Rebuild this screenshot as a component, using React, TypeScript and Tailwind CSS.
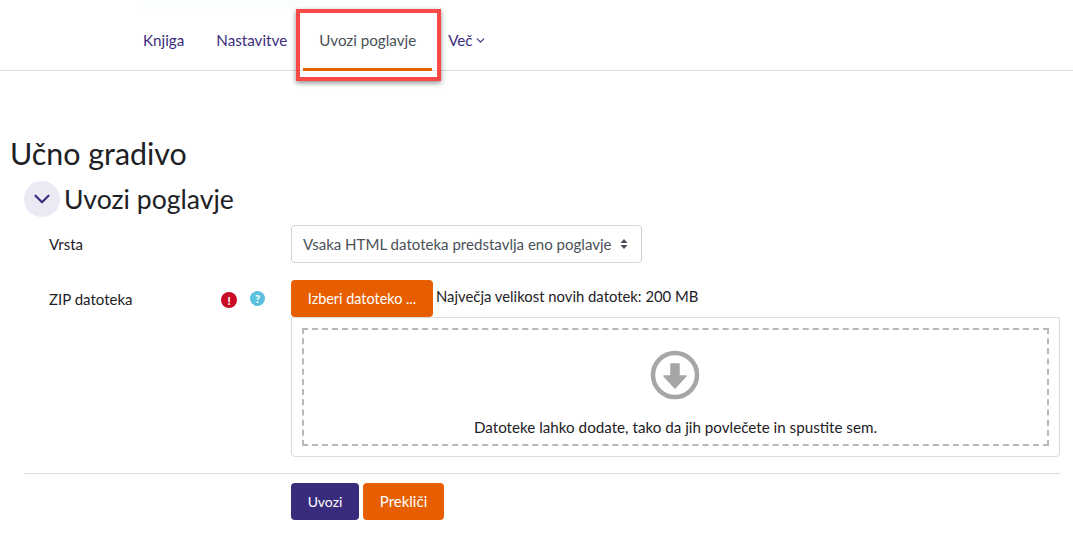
import { ChevronDown } from "lucide-react";

function Tab({ label, active }: { label: string; active?: boolean }) {
  return (
    <a className={`relative flex h-full items-center px-4 pt-[1px] text-[15.2px] ${active ? "text-[#495057]" : "text-[#3a2c7d]"}`}>
      {label}
      {active && <span className="absolute bottom-[-1px] left-0 right-0 h-[3px] bg-[#e75e00]" />}
    </a>
  );
}

export default function App() {
  return (
    <div className="relative h-[537px] w-[1073px] overflow-hidden bg-white font-['Lato','Noto_Sans',sans-serif] text-[#1d2125]">
      <div className="ml-[143px] h-[10px] w-[297px] bg-[#fbfeff]" />
      <nav className="flex h-[61px] items-stretch border-b border-[#dcdcdc] pl-[127px]">
        <Tab label="Knjiga" />
        <Tab label="Nastavitve" />
        <Tab label="Uvozi poglavje" active />
        <a className="flex items-center gap-[1px] px-4 pt-[1px] text-[15.2px] text-[#3a2c7d]">
          Več <ChevronDown size={13} strokeWidth={2} />
        </a>
      </nav>
      {/* red highlight on the screenshot */}
      <div className="absolute left-[296px] top-[9px] h-[72px] w-[145px] border-4 border-[#f94848] shadow-[0_2px_5px_rgba(0,0,0,0.45)]" />

      <h2 className="ml-[10px] mt-[63px] text-[30.4px] leading-[38px]">Učno gradivo</h2>

      <div className="ml-[24px] mt-[9px] w-[1036px]">
        <div className="flex h-[36px] items-center gap-[4px]">
          <span className="flex h-[36px] w-[36px] items-center justify-center rounded-full bg-[#ece9f4] text-[#3a2c7d]">
            <ChevronDown size={26} strokeWidth={2} />
          </span>
          <h3 className="text-[26.6px] leading-[36px]">Uvozi poglavje</h3>
        </div>

        <div className="mt-[8px] flex">
          <label className="flex w-[267px] items-center pl-[25px] text-[15px]">Vrsta</label>
          <div className="flex h-[38px] w-[351px] items-center justify-between rounded-[4px] border border-[#ced4da] pl-[11px] pr-[13px] text-[15.05px] text-[#495057]">
            Vsaka HTML datoteka predstavlja eno poglavje
            <svg width="8" height="12" viewBox="0 0 8 12" className="text-[#495057]">
              <path d="M4 1 7.5 5H.5zM4 11 .5 7h7z" fill="currentColor" />
            </svg>
          </div>
        </div>

        <div className="mt-[17px] flex">
          <div className="flex w-[267px] items-start pl-[25px] pt-[8px] text-[15px]">
            <label className="w-[172px]">ZIP datoteka</label>
            <span className="mt-[4px] flex h-4 w-4 items-center justify-center rounded-full bg-[#ca0b24] text-[11px] font-black leading-none text-white">!</span>
            <span className="ml-[13px] mt-[3px] flex h-[15px] w-[15px] items-center justify-center rounded-full bg-[#5bc0de] text-[11px] font-black leading-none text-white">?</span>
          </div>
          <div className="w-[769px]">
            <div className="flex h-[37px] items-start">
              <button className="h-[37px] w-[142px] rounded-[4px] bg-[#e75e00] text-[14.4px] text-white">Izberi datoteko ...</button>
              <span className="ml-[3px] mt-[5px] text-[14.85px]">Največja velikost novih datotek: 200 MB</span>
            </div>
            <div className="h-[140px] rounded-b-[4px] border border-[#dcdcdc] px-[10px] pb-[10px] pt-[10px]">
              <div className="flex h-[118px] flex-col items-center border-2 border-dashed border-[#b8b8b8]">
                <svg width="50" height="50" viewBox="0 0 50 50" className="mr-[1px] mt-[20px]">
                  <circle cx="25" cy="25" r="22" fill="none" stroke="#a6a6a6" strokeWidth="4.5" />
                  <path d="M21 14h8v12h7L25 38 14 26h7z" fill="#a6a6a6" stroke="#a6a6a6" strokeWidth="1.5" strokeLinejoin="round" />
                </svg>
                <p className="mt-[16px] text-[15.2px]">Datoteke lahko dodate, tako da jih povlečete in spustite sem.</p>
              </div>
            </div>
          </div>
        </div>

        <div className="mt-[16px] border-t border-[#dcdcdc] pl-[267px] pt-[9px]">
          <div className="flex gap-[4px]">
            <button className="h-[37px] w-[68px] rounded-[4px] bg-[#3a2c7d] text-[14px] text-white">Uvozi</button>
            <button className="h-[37px] w-[81px] rounded-[4px] bg-[#e75e00] text-[15px] text-white">Prekliči</button>
          </div>
        </div>
      </div>
    </div>
  );
}
